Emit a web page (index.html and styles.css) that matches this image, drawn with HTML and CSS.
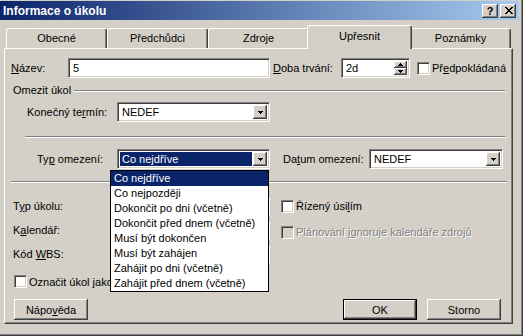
FILE: index.html
```html
<!DOCTYPE html>
<html lang="cs">
<head>
  <meta charset="UTF-8" />
  <title>Informace o úkolu</title>
  <link rel="stylesheet" href="styles.css">
</head>
<body>

<div class="window">
  <div class="titlebar">
    <span class="title">Informace o úkolu</span>
    <div class="caption-btns">
      <span class="cbtn help">?</span>
      <span class="cbtn close">
        <svg width="8" height="7" viewBox="0 0 8 7"><path d="M0 0h2v1H0zM6 0h2v1H6zM1 1h2v1H1zM5 1h2v1H5zM2 2h4v1H2zM3 3h2v1H3zM2 4h4v1H2zM1 5h2v1H1zM5 5h2v1H5zM0 6h2v1H0zM6 6h2v1H6z"/></svg>
      </span>
    </div>
  </div>

  <div class="tabs">
    <div class="tab">Obecné</div>
    <div class="tab">Předchůdci</div>
    <div class="tab">Zdroje</div>
    <div class="tab active">Upřesnit</div>
    <div class="tab">Poznámky</div>
  </div>

  <div class="panel">
    <div class="row row-name">
      <label class="lbl lbl-name"><u>N</u>ázev:</label>
      <div class="field name-field">5</div>
      <label class="lbl lbl-dur"><u>D</u>oba trvání:</label>
      <div class="field spin">
        <span class="field-text">2d</span>
        <span class="spin-btns">
          <span class="sbtn"><svg width="5" height="3"><path d="M2 0h1v1H2zM1 1h3v1H1zM0 2h5v1H0z"/></svg></span>
          <span class="sbtn"><svg width="5" height="3"><path d="M0 0h5v1H0zM1 1h3v1H1zM2 2h1v1H2z"/></svg></span>
        </span>
      </div>
      <span class="check check-est"></span>
      <label class="lbl">Př<u>e</u>dpokládaná</label>
    </div>

    <div class="group-title">
      <span>Omezit úkol</span>
      <span class="etch"></span>
    </div>

    <div class="row row-deadline">
      <label class="lbl lbl-deadline">Konečný te<u>r</u>mín:</label>
      <div class="field combo">
        <span class="field-text">NEDEF</span>
        <span class="cbo-btn"><svg width="5" height="3"><path d="M0 0h5v1H0zM1 1h3v1H1zM2 2h1v1H2z"/></svg></span>
      </div>
    </div>

    <div class="etch etch-mid"></div>

    <div class="row row-constraint">
      <label class="lbl lbl-ctype">Ty<u>p</u> omezení:</label>
      <div class="field combo open">
        <span class="field-text focus">Co nejdříve</span>
        <span class="cbo-btn"><svg width="5" height="3"><path d="M0 0h5v1H0zM1 1h3v1H1zM2 2h1v1H2z"/></svg></span>
        <ul class="dropdown">
          <li class="selected">Co nejdříve</li>
          <li>Co nejpozději</li>
          <li>Dokončit po dni (včetně)</li>
          <li>Dokončit před dnem (včetně)</li>
          <li>Musí být dokončen</li>
          <li>Musí být zahájen</li>
          <li>Zahájit po dni (včetně)</li>
          <li>Zahájit před dnem (včetně)</li>
        </ul>
      </div>
      <label class="lbl lbl-cdate">Da<u>t</u>um omezení:</label>
      <div class="field combo date-combo">
        <span class="field-text">NEDEF</span>
        <span class="cbo-btn"><svg width="5" height="3"><path d="M0 0h5v1H0zM1 1h3v1H1zM2 2h1v1H2z"/></svg></span>
      </div>
    </div>

    <div class="etch etch-full"></div>

    <!-- controls of the middle column sit under the open list -->
    <div class="task-grid">
      <label class="lbl">T<u>y</u>p úkolu:</label>
      <div class="field combo"></div>
      <div class="opt">
        <span class="check"></span>
        <span>Řízený úsi<u>l</u>ím</span>
      </div>

      <label class="lbl">K<u>a</u>lendář:</label>
      <div class="field combo"></div>
      <div class="opt disabled">
        <span class="check"></span>
        <span>Plánování <u>i</u>gnoruje kalendáře zdrojů</span>
      </div>

      <label class="lbl">Kód <u>W</u>BS:</label>
      <div class="field combo"></div>
      <div></div>
    </div>

    <div class="opt milestone">
      <span class="check"></span>
      <span class="clip">Označit úkol jako</span>
    </div>

    <div class="buttons">
      <button class="btn">Nápo<u>v</u>ěda</button>
      <span class="spacer"></span>
      <button class="btn default">OK</button>
      <button class="btn">Storno</button>
    </div>
  </div>
</div>

</body>
</html>
```

FILE: styles.css
```css
* {
  margin: 0;
  padding: 0;
  box-sizing: border-box;
}

body {
  font-family: "Liberation Sans", Arial, sans-serif;
  font-size: 11px;
  color: #000;
  background: #d4d0c8;
}

.window {
  width: 523px;
  height: 336px;
  padding: 1px 4px 3px 0;
  background: #d4d0c8;
  box-shadow: inset -1px -1px #404040, inset -2px -2px #808080;
}

/* title bar */
.titlebar {
  height: 19px;
  display: flex;
  align-items: center;
  justify-content: space-between;
  padding-left: 3px;
  background: linear-gradient(to right, #0a246a, #a6caf0);
  color: #fff;
  font-weight: bold;
  font-size: 12px;
}

.caption-btns {
  display: flex;
  gap: 2px;
  margin-right: 3px;
}

.cbtn {
  width: 16px;
  height: 14px;
  display: flex;
  align-items: center;
  justify-content: center;
  background: #d4d0c8;
  color: #000;
  font-size: 11px;
  font-weight: bold;
  box-shadow: inset -1px -1px #404040, inset 1px 1px #fff, inset -2px -2px #808080;
}

.cbtn svg {
  display: block;
  margin-left: 1px;
}

/* tabs */
.tabs {
  display: flex;
  align-items: flex-end;
  height: 23px;
  margin: 5px 0 0 4px;
  padding-left: 2px;
  position: relative;
  z-index: 2;
}

.tab {
  width: 101px;
  height: 20px;
  display: flex;
  align-items: center;
  justify-content: center;
  background: #d4d0c8;
  border-top: 1px solid #fff;
  border-left: 1px solid #fff;
  border-right: 1px solid #404040;
  border-radius: 3px 3px 0 0;
  box-shadow: inset -1px 0 #808080;
  padding-bottom: 1px;
}

.tab.active {
  width: 105px;
  height: 24px;
  margin: 0 -2px -1px;
  position: relative;
  z-index: 1;
  padding-bottom: 3px;
}

/* panel */
.panel {
  width: 509px;
  height: 276px;
  margin-left: 4px;
  border: 1px solid;
  border-color: #fff #404040 #404040 #fff;
  box-shadow: inset -1px -1px #808080;
  padding: 9px 5px 0 6px;
  position: relative;
}

.row {
  display: flex;
  align-items: center;
  height: 20px;
}

.lbl {
  white-space: nowrap;
}

.lbl-name { width: 57px; }
.lbl-dur { width: 68px; margin-left: 3px; }
.lbl-deadline { width: 90px; }
.lbl-ctype { width: 80px; }
.lbl-cdate { width: 86px; margin-left: 13px; }

.field {
  height: 20px;
  background: #fff;
  border: 1px solid;
  border-color: #808080 #fff #fff #808080;
  box-shadow: inset 1px 1px #404040, inset -1px -1px #d4d0c8;
  display: flex;
  align-items: stretch;
  padding: 2px;
  position: relative;
}

.name-field {
  width: 202px;
  padding-left: 4px;
  align-items: center;
}

.field-text {
  flex: 1;
  display: flex;
  align-items: center;
  padding-left: 2px;
  white-space: nowrap;
  overflow: hidden;
}

.field-text.focus {
  background: #0a246a;
  color: #fff;
  margin-right: 1px;
}

.spin { width: 69px; }

.spin-btns {
  width: 13px;
  display: flex;
  flex-direction: column;
}

.sbtn, .cbo-btn {
  flex: 1;
  display: flex;
  align-items: center;
  justify-content: center;
  background: #d4d0c8;
  box-shadow: inset -1px -1px #404040, inset 1px 1px #fff, inset -2px -2px #808080;
}

.sbtn svg, .cbo-btn svg {
  display: block;
}

.cbo-btn {
  flex: 0 0 14px;
}

.combo { width: 153px; }
.date-combo { width: 134px; }

.check {
  width: 13px;
  height: 13px;
  flex: none;
  background: #fff;
  border: 1px solid;
  border-color: #808080 #fff #fff #808080;
  box-shadow: inset 1px 1px #404040, inset -1px -1px #d4d0c8;
}

.check-est {
  margin: 0 2px 0 7px;
}

/* group and separators */
.group-title {
  display: flex;
  align-items: center;
  height: 14px;
  margin-top: 5px;
  padding-left: 2px;
}

.etch {
  height: 2px;
  border-top: 1px solid #808080;
  border-bottom: 1px solid #fff;
}

.group-title .etch {
  flex: 1;
  margin: 1px 2px 0 3px;
}

.row-deadline {
  margin-top: 5px;
  padding-left: 16px;
}

.etch-mid {
  margin: 14px 2px 0 14px;
}

.row-constraint {
  margin-top: 11px;
  padding-left: 26px;
}

.etch-full {
  margin-top: 12px;
}

/* dropdown list */
.dropdown {
  position: absolute;
  left: -8px;
  top: 20px;
  width: 159px;
  list-style: none;
  background: #fff;
  border: 1px solid #000;
  z-index: 5;
}

.dropdown li {
  height: 15px;
  line-height: 15px;
  padding-left: 3px;
  white-space: nowrap;
}

.dropdown li.selected {
  background: #0a246a;
  color: #fff;
}

/* lower part */
.task-grid {
  display: grid;
  grid-template-columns: 104px 153px 1fr;
  grid-auto-rows: 20px;
  row-gap: 4px;
  align-items: center;
  margin-top: 13px;
  padding-left: 2px;
}

.opt {
  display: flex;
  align-items: center;
  gap: 2px;
  margin-left: 11px;
  white-space: nowrap;
}

.opt.disabled {
  color: #808080;
  text-shadow: 1px 1px #fff;
  margin-top: 4px;
}

.opt.disabled .check {
  background: #d4d0c8;
}

.milestone {
  margin: 11px 0 0 3px;
  height: 13px;
}

.buttons {
  display: flex;
  height: 21px;
  margin: 11px 6px 0 3px;
}

.spacer {
  flex: 1;
}

.btn {
  width: 74px;
  height: 21px;
  font-family: inherit;
  font-size: 11px;
  color: #000;
  background: #d4d0c8;
  border: none;
  box-shadow: inset -1px -1px #404040, inset 1px 1px #fff, inset -2px -2px #808080;
}

.btn + .btn {
  margin-left: 10px;
}

.btn.default {
  border: 1px solid #000;
  box-shadow: inset -1px -1px #404040, inset 1px 1px #fff, inset -2px -2px #808080;
}
```
